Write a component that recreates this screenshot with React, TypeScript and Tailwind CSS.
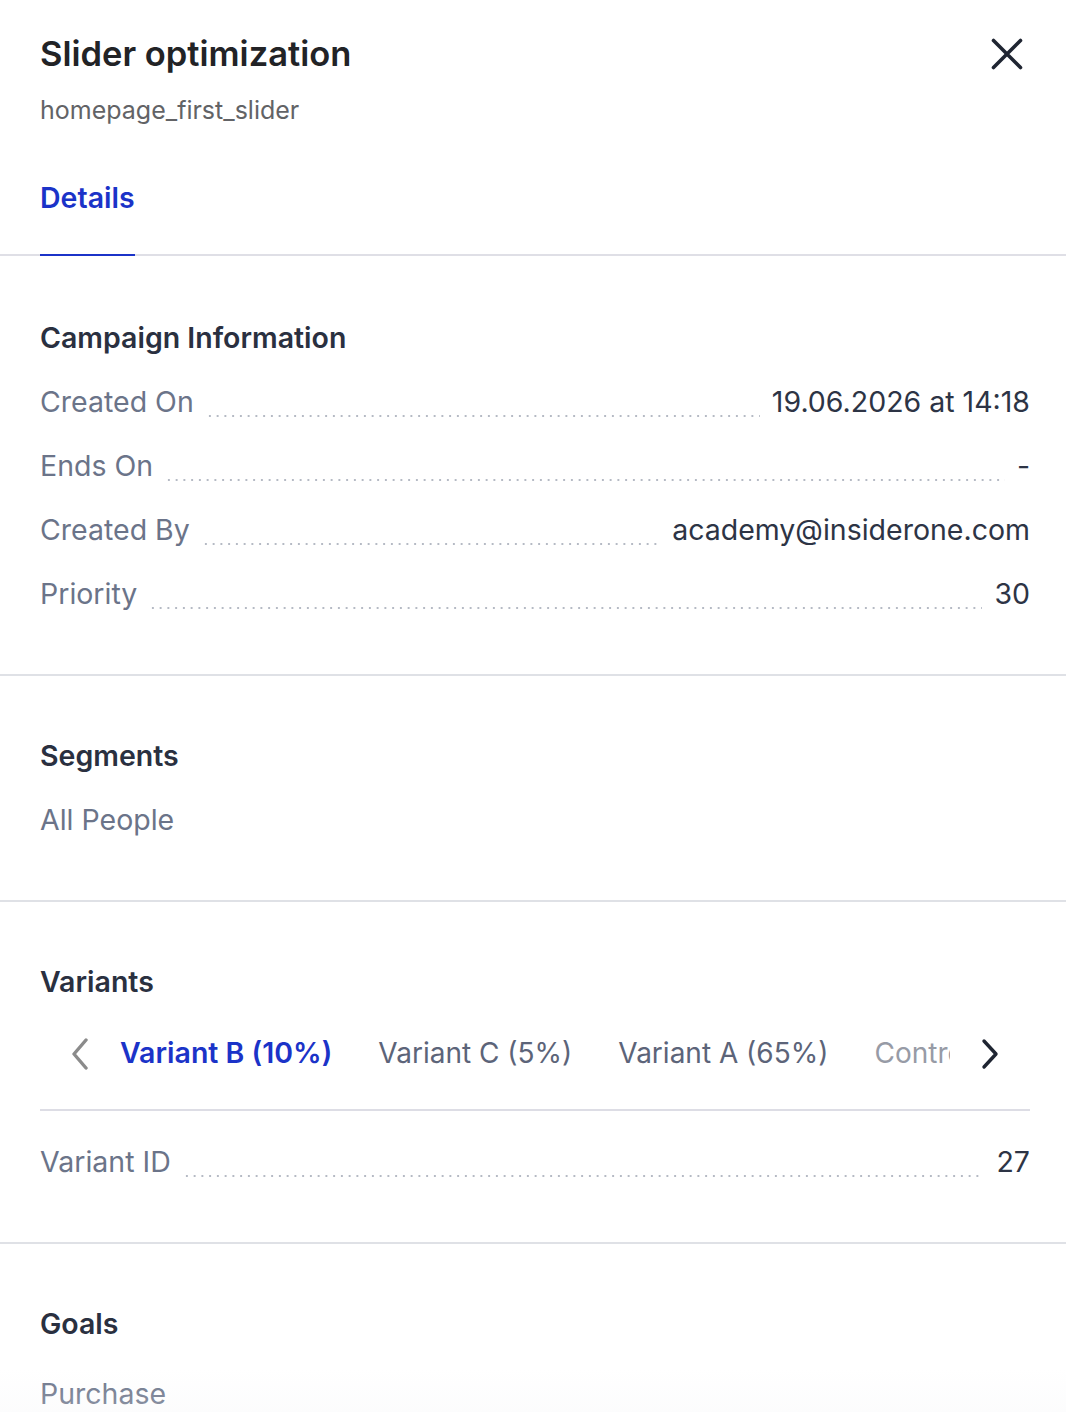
type Row = { label: string; value: string };

const campaignRows: Row[] = [
  { label: "Created On", value: "19.06.2026 at 14:18" },
  { label: "Ends On", value: "-" },
  { label: "Created By", value: "academy@insiderone.com" },
  { label: "Priority", value: "30" },
];

const variants = ["Variant B (10%)", "Variant C (5%)", "Variant A (65%)", "Control (20%)"];

/* label ....... value */
function InfoRow({ label, value }: Row) {
  return (
    <div className="flex h-16 items-center text-[28.5px] leading-9">
      <span className="text-[#6b7489]">{label}</span>
      <span className="mx-3 mb-4 h-1 flex-1 self-end bg-[radial-gradient(circle,_#b5bac4_1.1px,_transparent_1.5px)] bg-[length:7.75px_4px] bg-repeat-x" />
      <span className="text-[#2d3445]">{value}</span>
    </div>
  );
}

function SectionTitle({ children }: { children: string }) {
  return <h3 className="text-[28.5px] font-semibold leading-9 text-[#2a3040]">{children}</h3>;
}

function CloseIcon() {
  return (
    <svg width="32" height="32" viewBox="0 0 32 32" fill="none" stroke="#1f2532" strokeWidth="3.6" strokeLinecap="round">
      <path d="M2.5 2.5 29.5 29.5M29.5 2.5 2.5 29.5" />
    </svg>
  );
}

function Chevron({ dir, color }: { dir: "left" | "right"; color: string }) {
  return (
    <svg width="20" height="32" viewBox="0 0 20 32" fill="none" stroke={color} strokeWidth="3.4" strokeLinecap="round" strokeLinejoin="round">
      <path d={dir === "left" ? "M16 2 4 16l12 14" : "M4 3l12 13L4 29"} />
    </svg>
  );
}

export default function App() {
  return (
    <div className="relative h-[1412px] overflow-hidden bg-white font-['Inter',sans-serif]">
      <header className="pl-10 pr-9">
        <div className="mt-8 flex h-11 items-center justify-between">
          <h1 className="text-[34.5px] font-semibold text-[#222326]">Slider optimization</h1>
          <button className="mr-[7px]" aria-label="Close">
            <CloseIcon />
          </button>
        </div>
        <p className="mt-[18px] text-[25px] leading-8 text-[#626366]">homepage_first_slider</p>
      </header>

      <nav className="mt-[54px] border-b-2 border-[#dfdfe6] px-10">
        <button className="-mb-[2px] border-b-2 border-[#1b33c8] pb-[38px] text-[28.5px] font-semibold leading-9 text-[#1b33c8]">
          Details
        </button>
      </nav>

      <section className="border-b-2 border-[#dfe1e6] pb-12 pl-10 pr-9 pt-16">
        <SectionTitle>Campaign Information</SectionTitle>
        <div className="mt-[14px]">
          {campaignRows.map((r) => (
            <InfoRow key={r.label} {...r} />
          ))}
        </div>
      </section>

      <section className="border-b-2 border-[#dfe1e6] pb-12 pl-10 pr-9 pt-[62px]">
        <SectionTitle>Segments</SectionTitle>
        <div className="mt-[14px] flex h-16 items-center text-[28.5px] text-[#6b7489]">All People</div>
      </section>

      <section className="border-b-2 border-[#dfe1e6] pb-12 pl-10 pr-9 pt-[62px]">
        <SectionTitle>Variants</SectionTitle>

        <div className="mt-[14px] flex border-b-2 border-[#dddde5]">
          <button className="flex w-20 items-start justify-center pt-[24px]" aria-label="Previous">
            <Chevron dir="left" color="#8b8b8b" />
          </button>
          <div className="flex flex-1 gap-[46px] overflow-hidden whitespace-nowrap">
            {variants.map((v, i) => (
              <button
                key={v}
                className={
                  i === 0
                    ? "-mb-[2px] shrink-0 border-b-2 border-[#1b33c8] pb-[38px] pt-[21px] text-[28.5px] font-semibold leading-9 text-[#1b33c8]"
                    : i === 3
                      ? "shrink-0 pb-[38px] pt-[21px] text-[28px] leading-9 text-[#979ba6]"
                      : "shrink-0 pb-[38px] pt-[21px] text-[28px] leading-9 text-[#5c6479]"
                }
              >
                {v}
              </button>
            ))}
          </div>
          <button className="flex w-20 items-start justify-center pt-[24px]" aria-label="Next">
            <Chevron dir="right" color="#1f2532" />
          </button>
        </div>

        <div className="mt-[19px]">
          <InfoRow label="Variant ID" value="27" />
        </div>
      </section>

      <section className="pl-10 pr-9 pt-[62px]">
        <SectionTitle>Goals</SectionTitle>
        <div className="mt-5 flex h-16 items-center text-[28.5px] text-[#6b7489]">Purchase</div>
      </section>

      {/* scroll fade at the bottom of the panel */}
      <div className="pointer-events-none absolute inset-x-0 bottom-0 h-[44px] bg-gradient-to-b from-transparent to-[#f3f4f6]/25" />
    </div>
  );
}
